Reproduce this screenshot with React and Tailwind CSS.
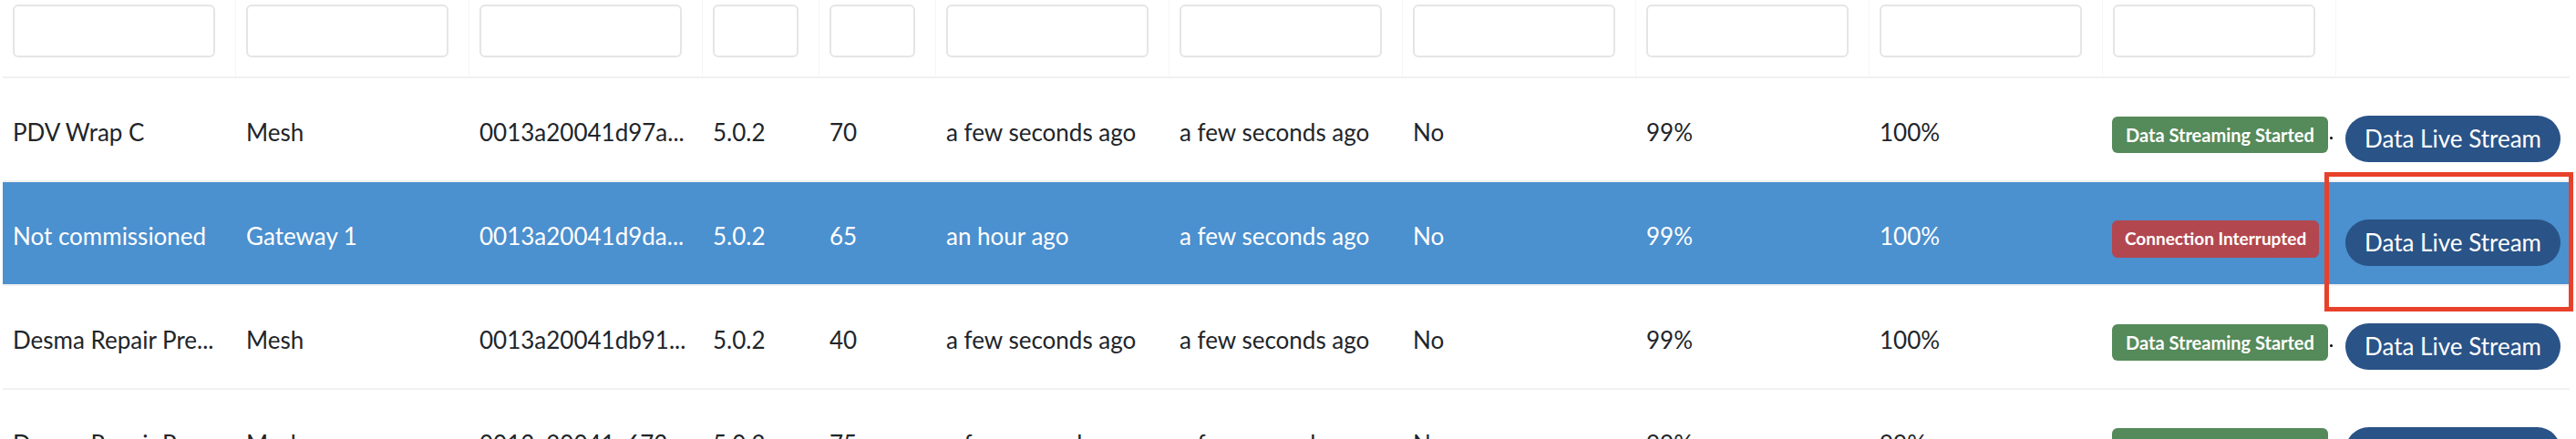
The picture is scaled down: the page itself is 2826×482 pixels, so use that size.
import React from "react";

const COLS = "grid grid-cols-[256px_256px_256px_128px_128px_256px_256px_256px_256px_256px_256px_256px]";

const rows = [
  { name: "PDV Wrap C", type: "Mesh", mac: "0013a20041d97a...", ver: "5.0.2", rssi: "70", seen: "a few seconds ago", data: "a few seconds ago", comm: "No", batt: "99%", sig: "100%", ok: true },
  { name: "Not commissioned", type: "Gateway 1", mac: "0013a20041d9da...", ver: "5.0.2", rssi: "65", seen: "an hour ago", data: "a few seconds ago", comm: "No", batt: "99%", sig: "100%", ok: false, selected: true },
  { name: "Desma Repair Pre...", type: "Mesh", mac: "0013a20041db91...", ver: "5.0.2", rssi: "40", seen: "a few seconds ago", data: "a few seconds ago", comm: "No", batt: "99%", sig: "100%", ok: true },
  { name: "Desma Repair Pre...", type: "Mesh", mac: "0013a20041c673...", ver: "5.0.2", rssi: "75", seen: "a few seconds ago", data: "a few seconds ago", comm: "No", batt: "99%", sig: "99%", ok: true },
];

export default function App() {
  return (
    <div className="relative h-[482px] w-[2826px] overflow-hidden bg-white font-['Lato',sans-serif] text-[#212529]">
      <div className="ml-[3px] w-[2816px]">
        {/* filter row */}
        <div className={`${COLS} h-[84px]`}>
          {Array.from({ length: 11 }).map((_, i) => (
            <div key={i} className="border-r border-[#f6f6f6] pl-[11px] pt-[5px]">
              <div className="h-[58px] w-[calc(100%-22px)] rounded-[6px] border-2 border-[#e5e5e5] bg-white" />
            </div>
          ))}
          <div />
        </div>

        {rows.map((r, i) => (
          <Row key={i} r={r} />
        ))}
      </div>

      {/* highlight annotation */}
      <div className="absolute left-[2550px] top-[189px] h-[153px] w-[273px] border-[5px] border-[#e8412b]" />
    </div>
  );
}

function Row({ r }) {
  const cells = [r.name, r.type, r.mac, r.ver, r.rssi, r.seen, r.data, r.comm, r.batt, r.sig];
  return (
    <div className={`${COLS} h-[114px] border-t-2 border-[#f1f1f1] ${r.selected ? "bg-[#4b90cf] text-white" : ""}`}>
      {cells.map((c, i) => (
        <div key={i} className="flex items-center overflow-hidden whitespace-nowrap pl-[11px] pt-[6px] text-[26px]">
          {c}
        </div>
      ))}
      <div className="flex items-center pl-[10px] pt-[12px]">
        {r.ok ? (
          <>
            <span className="flex h-[40px] items-center rounded-[6px] bg-[#558a5a] px-[15px] text-[20px] font-bold whitespace-nowrap text-white">
              Data Streaming Started
            </span>
            <span className="ml-[2px] mt-[6px] h-[3px] w-[3px] rounded-full bg-black" />
          </>
        ) : (
          <span className="flex h-[41px] items-center rounded-[6px] bg-[#b3474f] px-[14px] text-[19px] font-bold whitespace-nowrap text-white">
            Connection Interrupted
          </span>
        )}
      </div>
      <div className="flex items-center pl-[10px] pt-[20px]">
        <button className="flex h-[51px] w-[236px] items-center justify-center rounded-full bg-[#2a5387] text-[26px] text-white">
          Data Live Stream
        </button>
      </div>
    </div>
  );
}
